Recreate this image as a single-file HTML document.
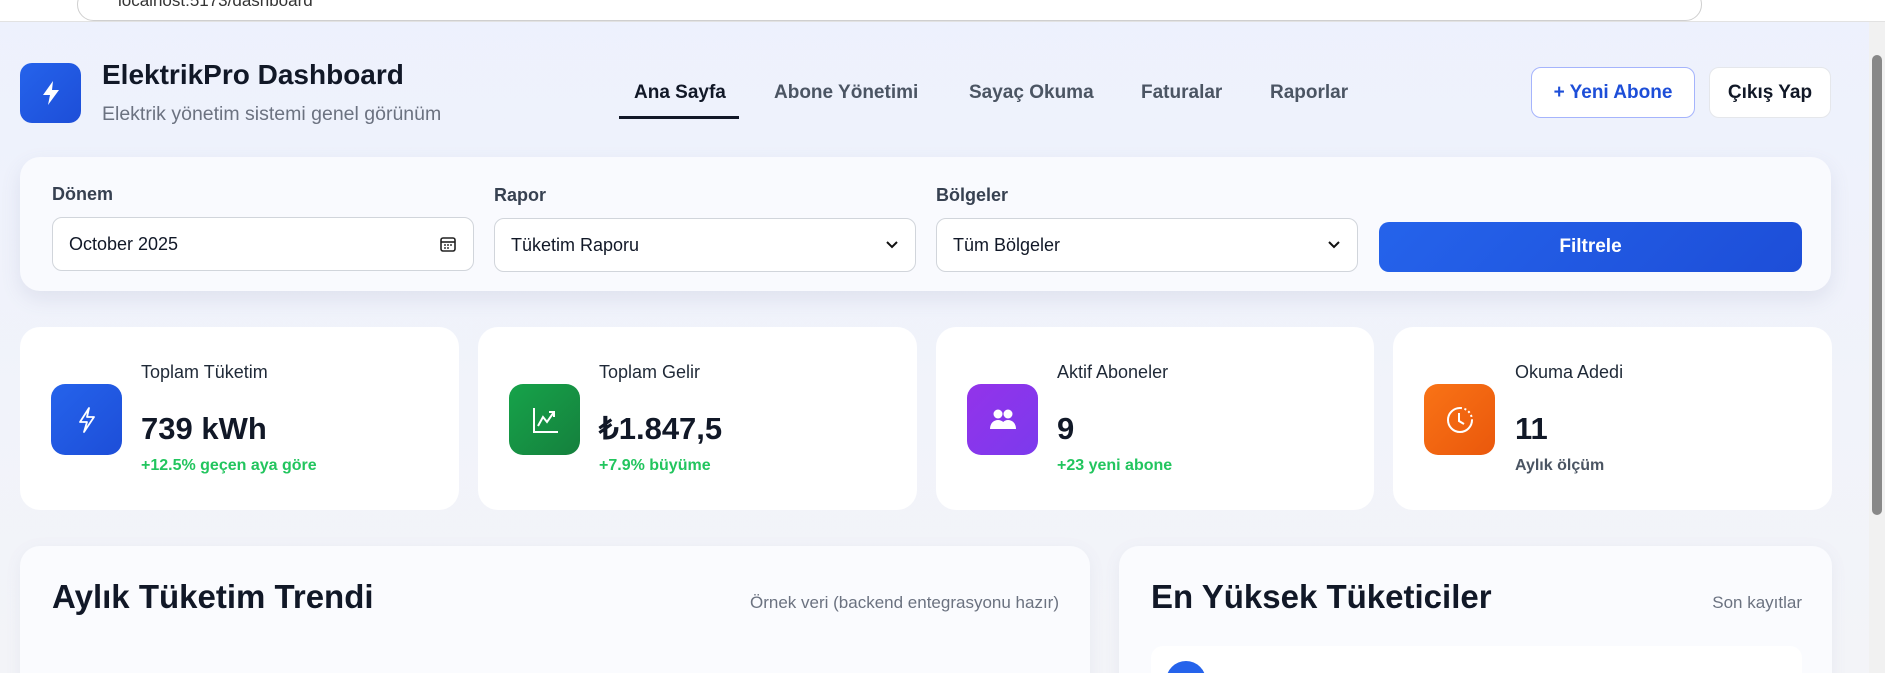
<!DOCTYPE html>
<html><head><meta charset="utf-8"><style>
*{box-sizing:border-box;margin:0;padding:0}
html,body{width:1885px;height:673px;overflow:hidden}
body{font-family:"Liberation Sans",sans-serif;background:linear-gradient(180deg,#edf1fd 0%,#f1f3fa 60%,#f3f4f8 100%);position:relative;color:#111827}
.abs{position:absolute}
.chrome{left:0;top:0;width:1885px;height:22px;background:#fff;border-bottom:1px solid #e2e2e2}
.url{left:77px;top:-12px;width:1625px;height:33px;border:1px solid #cfcfcf;border-radius:17px;background:#fff;font-size:17px;color:#333;padding:2px 0 0 40px}
.scroll{left:1869px;top:22px;width:16px;height:651px;background:#f1f1f1}
.thumb{left:1872px;top:55px;width:10px;height:460px;background:#888;border-radius:5px}
.card{background:#fff;border-radius:20px}
.lbl{font-size:18px;color:#374151;font-weight:bold}
.inp{height:54px;border:1px solid #d1d5db;border-radius:10px;background:#fff;font-size:18px;padding:0 16px;display:flex;align-items:center;justify-content:space-between;color:#111827}
.nav{font-size:19px;color:#4b5563;font-weight:bold;top:82px}
.ic{width:71px;height:71px;border-radius:14px;display:flex;align-items:center;justify-content:center}
.sl{font-size:18px;color:#1f2937}
.sv{font-size:31px;font-weight:bold;color:#111827}
.ss{font-size:16px;color:#22c55e;font-weight:bold}
</style></head><body>
<div class="abs chrome"></div>
<div class="abs url">localhost:5173/dashboard</div>
<div class="abs scroll"></div><div class="abs thumb"></div>

<div class="abs" style="left:20px;top:63px;width:61px;height:60px;border-radius:12px;background:linear-gradient(135deg,#2563eb,#1d4ed8);display:flex;align-items:center;justify-content:center">
<svg width="24" height="28" viewBox="0 0 24 28"><path d="M14 2 L4 16 H11 L9 26 L20 11 H13 Z" fill="#fff"/></svg></div>
<div class="abs" style="left:102px;top:59px;font-size:28px;font-weight:bold;color:#111827">ElektrikPro Dashboard</div>
<div class="abs" style="left:102px;top:103px;font-size:19.5px;color:#6b7280">Elektrik yönetim sistemi genel görünüm</div>

<div class="abs nav" style="left:634px;color:#111827">Ana Sayfa</div>
<div class="abs" style="left:619px;top:116px;width:120px;height:3px;background:#111827"></div>
<div class="abs nav" style="left:774px">Abone Yönetimi</div>
<div class="abs nav" style="left:969px">Sayaç Okuma</div>
<div class="abs nav" style="left:1141px">Faturalar</div>
<div class="abs nav" style="left:1270px">Raporlar</div>

<div class="abs" style="left:1531px;top:67px;width:164px;height:51px;border:1px solid #a5b4fc;border-radius:10px;background:#fff;color:#1d4ed8;font-size:19px;font-weight:bold;display:flex;align-items:center;justify-content:center">+ Yeni Abone</div>
<div class="abs" style="left:1709px;top:67px;width:122px;height:51px;border:1px solid #e5e7eb;border-radius:10px;background:#fff;color:#111827;font-size:19px;font-weight:bold;display:flex;align-items:center;justify-content:center">Çıkış Yap</div>

<div class="abs card" style="left:20px;top:157px;width:1811px;height:134px;background:#f9fafe;box-shadow:0 8px 20px rgba(100,110,150,.12)"></div>
<div class="abs lbl" style="left:52px;top:184px">Dönem</div>
<div class="abs lbl" style="left:494px;top:185px">Rapor</div>
<div class="abs lbl" style="left:936px;top:185px">Bölgeler</div>
<div class="abs inp" style="left:52px;top:217px;width:422px">October 2025<svg width="18" height="18" viewBox="0 0 18 18"><rect x="2" y="3" width="14" height="13" rx="2" fill="none" stroke="#222" stroke-width="1.6"/><path d="M2 7h14" stroke="#222" stroke-width="1.6"/><circle cx="6" cy="10" r=".9"/><circle cx="9" cy="10" r=".9"/><circle cx="12" cy="10" r=".9"/><circle cx="6" cy="13" r=".9"/><circle cx="9" cy="13" r=".9"/></svg></div>
<div class="abs inp" style="left:494px;top:218px;width:422px">Tüketim Raporu<svg width="14" height="10" viewBox="0 0 14 10"><path d="M2 2l5 5 5-5" fill="none" stroke="#111" stroke-width="2"/></svg></div>
<div class="abs inp" style="left:936px;top:218px;width:422px">Tüm Bölgeler<svg width="14" height="10" viewBox="0 0 14 10"><path d="M2 2l5 5 5-5" fill="none" stroke="#111" stroke-width="2"/></svg></div>
<div class="abs" style="left:1379px;top:222px;width:423px;height:50px;border-radius:10px;background:linear-gradient(135deg,#2563eb,#1d4ed8);color:#fff;font-size:19px;font-weight:bold;display:flex;align-items:center;justify-content:center">Filtrele</div>

<div class="abs card" style="left:20px;top:327px;width:439px;height:183px"></div>
<div class="abs card" style="left:478px;top:327px;width:439px;height:183px"></div>
<div class="abs card" style="left:936px;top:327px;width:438px;height:183px"></div>
<div class="abs card" style="left:1393px;top:327px;width:439px;height:183px"></div>

<div class="abs ic" style="left:51px;top:384px;background:linear-gradient(135deg,#2563eb,#1d4ed8)"><svg width="24" height="30" viewBox="0 0 24 30"><path d="M14 3 L5 17 H12 L9 27 L19 12 H12 Z" fill="none" stroke="#fff" stroke-width="1.8" stroke-linejoin="round"/></svg></div>
<div class="abs sl" style="left:141px;top:362px">Toplam Tüketim</div>
<div class="abs sv" style="left:141px;top:411px">739 kWh</div>
<div class="abs ss" style="left:141px;top:457px">+12.5% geçen aya göre</div>

<div class="abs ic" style="left:509px;top:384px;background:linear-gradient(135deg,#16a34a,#15803d)"><svg width="30" height="30" viewBox="0 0 30 30"><path d="M4 3V27H28" fill="none" stroke="#fff" stroke-width="2"/><path d="M8 21L13 12L17 17L24 7M19 7H24V12" fill="none" stroke="#fff" stroke-width="2"/></svg></div>
<div class="abs sl" style="left:599px;top:362px">Toplam Gelir</div>
<div class="abs sv" style="left:599px;top:411px">₺1.847,5</div>
<div class="abs ss" style="left:599px;top:457px">+7.9% büyüme</div>

<div class="abs ic" style="left:967px;top:384px;background:linear-gradient(135deg,#9333ea,#7c3aed)"><svg width="30" height="26" viewBox="0 0 30 26"><circle cx="10" cy="7" r="4.5" fill="#fff"/><circle cx="20" cy="7" r="4.5" fill="#fff"/><path d="M2 22c0-6 4-9 8-9s8 3 8 9z M13 22c0-6 3-9 7-9s8 3 8 9z" fill="#fff"/></svg></div>
<div class="abs sl" style="left:1057px;top:362px">Aktif Aboneler</div>
<div class="abs sv" style="left:1057px;top:411px">9</div>
<div class="abs ss" style="left:1057px;top:457px">+23 yeni abone</div>

<div class="abs ic" style="left:1424px;top:384px;background:linear-gradient(135deg,#f97316,#ea580c)"><svg width="32" height="32" viewBox="0 0 32 32"><path d="M16 4A12 12 0 1 0 28 16" fill="none" stroke="#fff" stroke-width="2"/><path d="M16 4A12 12 0 0 1 28 16" fill="none" stroke="#fff" stroke-width="2" stroke-dasharray="2 2.5"/><path d="M15 9V17L20 20" fill="none" stroke="#fff" stroke-width="2"/></svg></div>
<div class="abs sl" style="left:1515px;top:362px">Okuma Adedi</div>
<div class="abs sv" style="left:1515px;top:411px">11</div>
<div class="abs ss" style="left:1515px;top:457px;color:#4b5563">Aylık ölçüm</div>

<div class="abs card" style="left:20px;top:546px;width:1070px;height:160px;background:#fafbfe;box-shadow:0 4px 16px rgba(100,110,150,.08)"></div>
<div class="abs card" style="left:1119px;top:546px;width:713px;height:160px;background:#fafbfe;box-shadow:0 4px 16px rgba(100,110,150,.08)"></div>
<div class="abs" style="left:52px;top:578px;font-size:33px;font-weight:bold;color:#111827">Aylık Tüketim Trendi</div>
<div class="abs" style="left:660px;top:593px;width:399px;text-align:right;font-size:17px;color:#6b7280">Örnek veri (backend entegrasyonu hazır)</div>
<div class="abs" style="left:1151px;top:578px;font-size:33px;font-weight:bold;color:#111827">En Yüksek Tüketiciler</div>
<div class="abs" style="left:1600px;top:593px;width:202px;text-align:right;font-size:17px;color:#6b7280">Son kayıtlar</div>
<div class="abs" style="left:1151px;top:646px;width:651px;height:40px;border-radius:12px;background:#fff"></div>
<div class="abs" style="left:1166px;top:661px;width:40px;height:40px;border-radius:50%;background:#2563eb"></div>
</body></html>
